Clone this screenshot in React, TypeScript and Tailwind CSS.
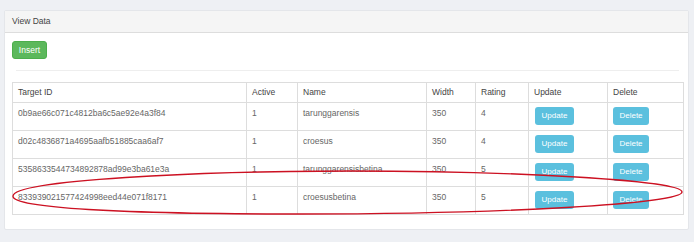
import React from "react";

const rows = [
  { id: "0b9ae66c071c4812ba6c5ae92e4a3f84", active: 1, name: "tarunggarensis", width: 350, rating: 4 },
  { id: "d02c4836871a4695aafb51885caa6af7", active: 1, name: "croesus", width: 350, rating: 4 },
  { id: "5358633544734892878ad99e3ba61e3a", active: 1, name: "tarunggarensisbetina", width: 350, rating: 5 },
  { id: "833939021577424998eed44e071f8171", active: 1, name: "croesusbetina", width: 350, rating: 5 },
];

const th = "border border-[#dddddd] px-[5px] h-[20px] text-left font-normal text-[#444444] align-middle";
const td = "border border-[#dddddd] px-[5px] pt-[4px] pb-[5px] h-[28px] text-[#666666] align-top";

export default function App() {
  return (
    <div
      className="relative w-[694px] h-[242px] bg-[#eef0f4] pt-[10px] pl-[4px] overflow-hidden"
      style={{ fontFamily: '"Liberation Sans", Arial, sans-serif' }}
    >
      {/* panel */}
      <div className="w-[685px] h-[220px] bg-white border border-[#e4e6ea] rounded-[2px]">
        <div className="h-[22px] bg-[#f5f5f5] border-b border-[#dddddd] pl-[7px] flex items-center text-[8.5px] text-[#444444]">
          View Data
        </div>
        <div className="pt-[8px] px-[7px]">
          <button className="block w-[35px] h-[18px] bg-[#5cb85c] text-white text-[8.5px] rounded-[3px] border border-[#4cae4c]">
            Insert
          </button>
          <hr className="mt-[11px] ml-[4px] mr-[2px] border-t border-[#eeeeee]" />
          <table className="mt-[11px] w-[671px] table-fixed border-collapse text-[8.5px]">
            <colgroup>
              <col className="w-[234px]" />
              <col className="w-[51px]" />
              <col className="w-[129px]" />
              <col className="w-[49px]" />
              <col className="w-[53px]" />
              <col className="w-[79px]" />
              <col className="w-[76px]" />
            </colgroup>
            <thead>
              <tr>
                <th className={th}>Target ID</th>
                <th className={th}>Active</th>
                <th className={th}>Name</th>
                <th className={th}>Width</th>
                <th className={th}>Rating</th>
                <th className={th}>Update</th>
                <th className={th}>Delete</th>
              </tr>
            </thead>
            <tbody>
              {rows.map((r) => (
                <tr key={r.id}>
                  <td className={td}>{r.id}</td>
                  <td className={td}>{r.active}</td>
                  <td className={td}>{r.name}</td>
                  <td className={td}>{r.width}</td>
                  <td className={td}>{r.rating}</td>
                  <td className="border border-[#dddddd] pl-[6px] pt-[4px] align-top">
                    <button className="block w-[39px] h-[18px] bg-[#5bc0de] text-white text-[8px] rounded-[3px]">Update</button>
                  </td>
                  <td className="border border-[#dddddd] pl-[5px] pt-[4px] align-top">
                    <button className="block w-[36px] h-[18px] bg-[#5bc0de] text-white text-[8px] rounded-[3px]">Delete</button>
                  </td>
                </tr>
              ))}
            </tbody>
          </table>
        </div>
      </div>

      {/* red annotation */}
      <svg className="absolute inset-0 pointer-events-none" width="694" height="242" viewBox="0 0 694 242">
        <path
          d="M 13 196 C 14 180, 200 171, 350 171 C 510 171, 682 180, 682 192 C 682 204, 500 214, 300 214 C 120 214, 12 208, 13 196 Z"
          fill="none"
          stroke="#cc1122"
          strokeWidth="1.4"
        />
      </svg>
    </div>
  );
}
